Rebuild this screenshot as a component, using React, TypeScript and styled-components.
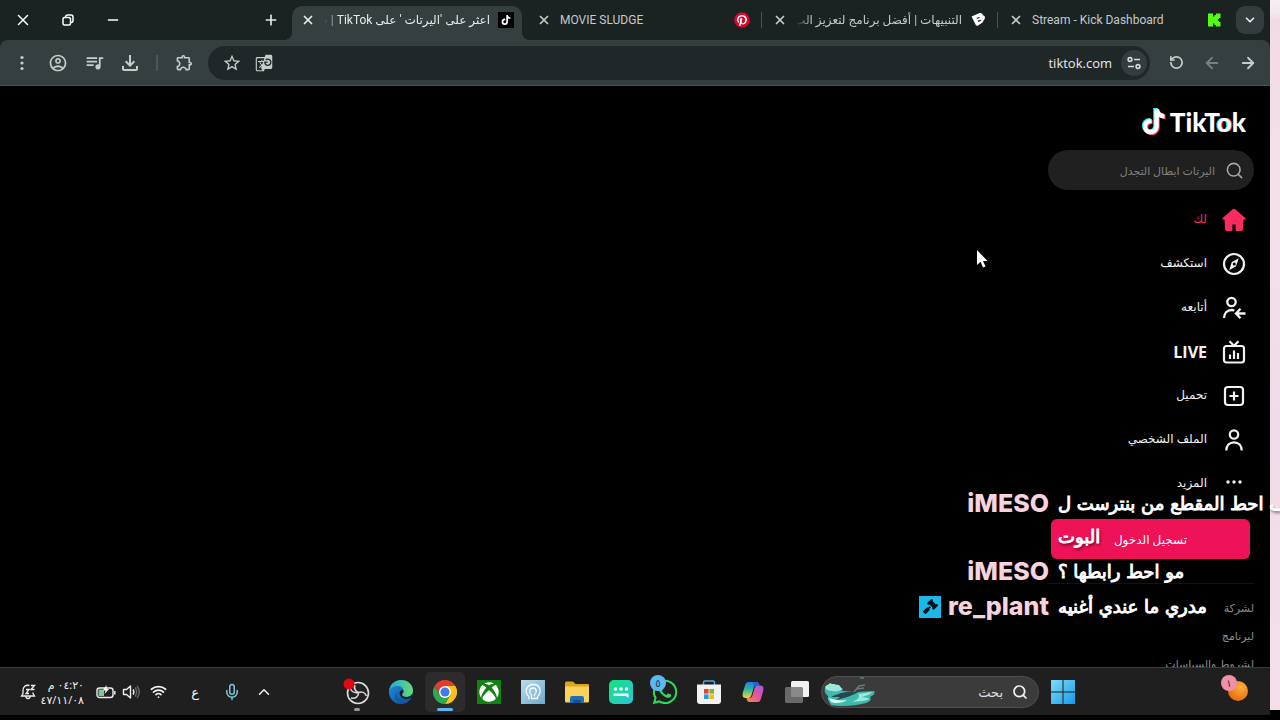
import React from "react";
import styled, { createGlobalStyle, css } from "styled-components";
import {
  ArrowLeft,
  ArrowRight,
  ChevronDown,
  ChevronUp,
  Mic,
  Minus,
  Plus,
  RotateCcw,
  Search,
  Wifi,
  X,
} from "lucide-react";
import {
  MdGTranslate,
  MdOutlineAccountCircle,
  MdOutlineExtension,
  MdOutlineFileDownload,
  MdQueueMusic,
  MdStarBorder,
} from "react-icons/md";
import { FaGavel, FaPinterest, FaTiktok, FaWhatsapp, FaXbox } from "react-icons/fa6";

const uiFont = `"Open Sans", "DejaVu Sans", sans-serif`;
const tabFont = `Roboto, "DejaVu Sans", sans-serif`;

const GlobalStyle = createGlobalStyle`
  * { box-sizing: border-box; }
  body { margin: 0; background: #000; overflow: hidden; font-family: ${uiFont}; }
  button, input { font-family: inherit; }
  button { border: 0; padding: 0; background: none; color: inherit; }
  a { color: inherit; text-decoration: none; }
  svg { display: block; flex: none; }
`;

const Desktop = styled.div`
  position: relative;
  display: grid;
  grid-template-columns: minmax(0, 1fr) 10px;
  height: 100vh;
  padding-bottom: 5px;
  overflow: hidden;
`;

const Screen = styled.div`
  display: flex;
  flex-direction: column;
  min-width: 0;
  min-height: 0;
`;

const Wallpaper = styled.div`
  margin-bottom: 5px;
  background: linear-gradient(#f4eef4, #f3e9f0 12px, #f1dce6 20px, #f5e0ea 180px, #f2dbe8 420px, #f4dfea);
`;

/* Browser chrome */

const TabStrip = styled.div`
  display: flex;
  height: 40px;
  padding-right: 6px;
  background: #1a2222;
  color: #e3e8e8;
`;

const TabSearch = styled.button`
  display: grid;
  place-items: center;
  width: 28px;
  height: 28px;
  margin: 6px 0 0 3px;
  border-radius: 9px;
  background: #353c3d;
`;

const TabBox = styled.div<{ $active?: boolean; $divided?: boolean }>`
  position: relative;
  z-index: 0;
  display: flex;
  align-items: center;
  gap: 8px;
  flex: 0 1 236px;
  min-width: 0;
  margin-top: 6px;
  padding: 0 11px 6px;
  color: ${(p) => (p.$active ? "#e6eaea" : "#c5caca")};
  ${(p) =>
    p.$divided &&
    css`
      &::after {
        content: "";
        position: absolute;
        left: 0;
        top: 6px;
        width: 1px;
        height: 16px;
        background: #4a5253;
      }
    `}
`;

const ActiveShape = styled.span`
  position: absolute;
  z-index: -1;
  inset: 0 3px;
  border-radius: 10px 10px 0 0;
  background: #363f40;
  &::before,
  &::after {
    content: "";
    position: absolute;
    bottom: 0;
    width: 8px;
    height: 8px;
  }
  &::before {
    left: -8px;
    background: radial-gradient(circle at 0 0, transparent 8px, #363f40 8px);
  }
  &::after {
    right: -8px;
    background: radial-gradient(circle at 100% 0, transparent 8px, #363f40 8px);
  }
`;

const TabTitle = styled.span<{ $fade?: boolean }>`
  flex: 1;
  min-width: 0;
  overflow: hidden;
  white-space: nowrap;
  font-family: ${tabFont};
  font-size: 12px;
  line-height: 20px;
  ${(p) => p.$fade && css`mask-image: linear-gradient(to right, transparent, #000 16px);`}
`;

const TabClose = styled.button`
  display: grid;
  place-items: center;
  width: 16px;
  height: 16px;
`;

const PinterestMark = styled(FaPinterest)`
  color: #d9062c;
  background: radial-gradient(circle, #fff 6px, transparent 7px);
`;

const NewTab = styled.button`
  display: grid;
  place-items: center;
  width: 28px;
  height: 28px;
  margin: 6px 4px 0 auto;
`;

const WindowControls = styled.div`
  display: flex;
  margin-right: auto;
`;

const WindowButton = styled.button`
  display: grid;
  place-items: center;
  width: 45px;
  height: 40px;
  color: #fff;
`;

const ToolbarBack = styled.div`
  background: #1a2222;
`;

const Toolbar = styled.div`
  display: flex;
  align-items: center;
  height: 46px;
  padding: 0 4px;
  border-bottom: 1px solid #465051;
  border-radius: 8px 8px 0 0;
  background: #363f40;
  color: #c7cccc;
`;

const ToolButton = styled.button<{ $dim?: boolean }>`
  display: grid;
  place-items: center;
  width: 36px;
  height: 36px;
  opacity: ${(p) => (p.$dim ? 0.45 : 1)};
`;

const ToolDivider = styled.span`
  width: 2px;
  height: 16px;
  margin: 0 8px;
  background: #4d5657;
`;

const AddressBar = styled.div`
  display: flex;
  align-items: center;
  flex: 1;
  min-width: 0;
  height: 34px;
  margin: 0 8px 0 6px;
  padding: 0 3px 0 8px;
  border-radius: 17px;
  background: #1f2728;
`;

const SiteInfo = styled.button`
  display: grid;
  place-items: center;
  width: 26px;
  height: 26px;
  border-radius: 50%;
  background: #353c3d;
`;

const AddressInput = styled.input`
  flex: 1;
  min-width: 0;
  margin: 0 9px;
  padding: 0;
  border: 0;
  outline: 0;
  background: none;
  color: #e8ecec;
  font-size: 13px;
  text-align: right;
`;

const AddressAction = styled.button`
  display: grid;
  place-items: center;
  width: 32px;
  height: 32px;
`;

const MirroredTranslate = styled(MdGTranslate)`
  transform: scaleX(-1);
`;

/* TikTok page */

const Page = styled.main`
  display: flex;
  flex: 1;
  min-height: 0;
  overflow: hidden;
  background: #000;
  color: #f2f2f2;
`;

const Sidebar = styled.aside`
  display: flex;
  flex-direction: column;
  flex: none;
  width: 222px;
  padding: 20px 16px 0 0;
  & > * {
    flex-shrink: 0;
  }
`;

const Logo = styled.a`
  display: flex;
  align-items: center;
  gap: 3px;
  align-self: flex-start;
  height: 32px;
  margin-right: 8px;
  color: #fff;
  font-family: Lato, sans-serif;
  font-size: 26px;
  font-weight: 900;
  line-height: 32px;
`;

const LogoO = styled.span`
  text-shadow: -1px 0 #25f4ee, 1px 0 #fe2c55;
`;

const SearchField = styled.label`
  display: flex;
  align-items: center;
  gap: 10px;
  height: 40px;
  margin-top: 12px;
  padding: 0 10px;
  border-radius: 20px;
  background: #202020;
  color: #a8a8a8;
`;

const SearchInput = styled.input`
  flex: 1;
  min-width: 0;
  padding: 0;
  border: 0;
  outline: 0;
  background: none;
  color: #808080;
  font-size: 11px;
`;

const Nav = styled.nav`
  display: flex;
  flex-direction: column;
  gap: 4px;
  margin-top: 10px;
`;

const NavLink = styled.a<{ $active?: boolean }>`
  display: flex;
  align-items: center;
  gap: 15px;
  height: 40px;
  padding-right: 8px;
  color: ${(p) => (p.$active ? "#fb2b5f" : "#f2f2f2")};
  font-size: 12px;
  line-height: 20px;
`;

const NavText = styled.span<{ $latin?: boolean }>`
  margin-bottom: 2px;
  ${(p) => p.$latin && css`margin-bottom: 0; font-size: 16px; font-weight: 700;`}
`;

const LoginButton = styled.button`
  height: 40px;
  margin: 15px 4px 0 3px;
  border-radius: 6px;
  background: #ee1257;
  color: #fff;
  font-size: 12px;
`;

const FooterLinks = styled.div`
  display: flex;
  flex-direction: column;
  gap: 8px;
  margin-top: 24px;
  padding-top: 14px;
  border-top: 1px solid #141414;
  color: #8c8c8c;
  font-size: 11px;
  line-height: 20px;
`;

/* Taskbar */

const Taskbar = styled.footer`
  display: flex;
  align-items: center;
  height: 48px;
  padding: 0 14px 0 16px;
  border-top: 1px solid #3b3b3b;
  background: #1f1f1f;
  color: #f2f2f2;
`;

const TaskButton = styled.button<{ $active?: boolean }>`
  position: relative;
  display: grid;
  place-items: center;
  width: 40px;
  height: 40px;
  border-radius: 5px;
  background: ${(p) => (p.$active ? "#2c2c2c" : "none")};
`;

const Apps = styled.div`
  display: flex;
  align-items: center;
  gap: 4px;
  margin-right: 133px;
`;

const RunningMark = styled.span<{ $focused?: boolean }>`
  position: absolute;
  bottom: 1px;
  left: 50%;
  width: ${(p) => (p.$focused ? 16 : 6)}px;
  height: 3px;
  border-radius: 2px;
  background: ${(p) => (p.$focused ? "#5cb8f0" : "#9a9a9a")};
  transform: translateX(-50%);
`;

const TaskSearch = styled.label`
  display: flex;
  align-items: center;
  gap: 9px;
  width: 218px;
  height: 32px;
  padding: 0 10px 0 2px;
  border: 1px solid #505050;
  border-radius: 16px;
  background: #3b3b3b;
`;

const TaskSearchInput = styled.input`
  flex: 1;
  min-width: 0;
  padding: 0;
  border: 0;
  outline: 0;
  background: none;
  color: #e0e0e0;
  font-size: 13px;
  &::placeholder {
    color: #e0e0e0;
    opacity: 1;
  }
`;

const Badge = styled.span<{ $tone: string }>`
  position: absolute;
  top: 3px;
  right: 19px;
  width: 16px;
  height: 16px;
  border-radius: 50%;
  background: ${(p) => p.$tone};
  color: #21303c;
  font-size: 10px;
  line-height: 16px;
  text-align: center;
`;

const Tray = styled.div`
  display: flex;
  align-items: center;
  margin-right: auto;
`;

const TrayButton = styled.button<{ $width: number }>`
  display: grid;
  place-items: center;
  width: ${(p) => p.$width}px;
  height: 40px;
  font-size: 13px;
`;

const Clock = styled.time`
  width: 52px;
  padding-right: 8px;
  font-size: 11px;
  line-height: 15px;
  text-align: right;
  white-space: nowrap;
`;

/* Stream chat that floats over the desktop */

const Chat = styled.section`
  position: absolute;
  top: 487px;
  left: calc(100% - 380px);
  display: grid;
  grid-template-columns: 149px max-content;
  column-gap: 9px;
  color: #fff;
  line-height: 33px;
  text-shadow: 1px 2px 3px rgba(0, 0, 0, 0.7);
`;

const ChatName = styled.strong`
  display: flex;
  align-items: center;
  justify-content: flex-end;
  gap: 7px;
  height: 33px;
  color: #f6d3dd;
  font-family: Inter, sans-serif;
  font-size: 25px;
  font-weight: 800;
`;

const ChatText = styled.div`
  display: flex;
  flex-direction: column;
  align-items: flex-start;
  margin-bottom: 2px;
  font-family: "DejaVu Sans", sans-serif;
  font-size: 18px;
  white-space: nowrap;
  -webkit-text-stroke: 1px #fff;
`;

const ModBadge = styled.span`
  display: grid;
  place-items: center;
  width: 22px;
  height: 22px;
  background: #19b9ea;
  color: #06131c;
`;

const Pointer = styled.svg`
  position: absolute;
  top: 249px;
  left: calc(100% - 304px);
`;

const TuneIcon = () => (
  <svg width="16" height="16" viewBox="0 0 16 16" fill="none" stroke="#d5dada" strokeWidth="1.6">
    <circle cx="4" cy="4.5" r="1.9" />
    <path d="M8 4.5h6M2 11.5h6" />
    <circle cx="12" cy="11.5" r="1.9" />
  </svg>
);

const MenuDots = () => (
  <svg width="16" height="16" viewBox="0 0 16 16" fill="currentColor">
    <circle cx="8" cy="2.5" r="1.6" />
    <circle cx="8" cy="8" r="1.6" />
    <circle cx="8" cy="13.5" r="1.6" />
  </svg>
);

const RestoreIcon = () => (
  <svg width="12" height="12" viewBox="0 0 12 12" fill="none" stroke="currentColor" strokeWidth="1.5">
    <rect x="1" y="3.5" width="7.5" height="7.5" rx="1.5" />
    <path d="M3.5 3.2V3a2 2 0 0 1 2-2H9a2 2 0 0 1 2 2v3.500a2 2 0 0 1-2 2h-.3" />
  </svg>
);

const KickIcon = () => (
  <svg width="16" height="16" viewBox="0 0 16 16" fill="#53fc18">
    <path d="M2 1.500h5v3h1.500V3H10V1.500h4.500V6H13v1.200h-1.200v1.600H13V10h1.500v4.500H10V13H8.500v-1.500H7v3H2z" />
  </svg>
);

const BotIcon = () => (
  <svg width="16" height="16" viewBox="0 0 16 16">
    <path
      fill="#fff"
      fillRule="evenodd"
      d="M1.500 4.500 9 1.200c2-.8 3.800.2 3.900 2 1.800.2 2.700 2 1.700 3.700l-2.100 3.600-5.200 3.600-1.500-1.200zM6.500 5.900l.5 1.200 2.200-1c.8-.4.400-1.500-.4-1.200zM7.700 8.800l.6 1.300 2.300-1.100c.8-.5.300-1.600-.6-1.200z"
    />
  </svg>
);

const TikTokTile = () => (
  <svg width="16" height="16" viewBox="0 0 16 16">
    <path fill="#000" d="M0 0h16v16H0z" />
    <FaTiktok x={3} y={3} size={10} color="#fff" />
  </svg>
);

const TikTokNote = () => {
  const note =
    "M12.300 1h4.400c.5 3 2.600 5 5.800 5.300v4.200c-2.100 0-4.100-.6-5.700-1.700v9.400c0 5-3.500 8.300-8 8.300S1 23.200 1 18.800c0-4.700 3.700-8 8.600-7.700v4.200c-2.400-.4-4.300 1.100-4.300 3.400 0 2 1.500 3.500 3.500 3.500 2.100 0 3.500-1.500 3.500-4z";
  return (
    <svg width="26" height="30" viewBox="0 0 26 30">
      <path d={note} fill="#25f4ee" transform="translate(0 0)" />
      <path d={note} fill="#fe2c55" transform="translate(2 1.800)" />
      <path d={note} fill="#fff" transform="translate(1 .9)" />
    </svg>
  );
};

const HomeIcon = () => (
  <svg width="24" height="24" viewBox="0 0 24 24" fill="#fb2b5f">
    <path d="M12 .8c.5 0 .9.2 1.300.5l10 8.600c.7.6.3 1.700-.6 1.700h-1.200l-.6 9.800c-.1.900-.8 1.500-1.700 1.500h-5.600v-6.500h-3.200v6.500H4.800c-.9 0-1.600-.6-1.700-1.500l-.6-9.800H1.300c-.9 0-1.300-1.100-.6-1.700l10-8.600c.4-.3.800-.5 1.300-.5z" />
  </svg>
);

const CompassIcon = () => (
  <svg width="24" height="24" viewBox="0 0 24 24" fill="none" stroke="currentColor" strokeWidth="2.200">
    <circle cx="12" cy="12" r="10" />
    <path fill="currentColor" stroke="none" fillRule="evenodd" d="M16.800 6.200 14 14.300l-6.800 3.900 2.600-8.300zM12.200 10.600a1.500 1.500 0 1 0 .1 3 1.500 1.500 0 0 0-.1-3z" />
  </svg>
);

const FollowingIcon = () => (
  <svg width="24" height="24" viewBox="0 0 24 24" fill="none" stroke="currentColor" strokeWidth="2.300">
    <circle cx="9.500" cy="6" r="4.200" />
    <path d="M2 22c.2-4.800 3-8 7.500-8 1.200 0 2 .2 2.800.5M23.500 17.500h-9M18.500 12.800l-4.500 4.700 4.500 4.700" />
  </svg>
);

const LiveIcon = () => (
  <svg width="24" height="24" viewBox="0 0 24 24" fill="none" stroke="currentColor" strokeWidth="2.200">
    <rect x="2" y="6" width="20" height="16.500" rx="2.500" />
    <path d="m7.500 1.200 4.500 4.600 4.500-4.600M8 14.500v4.500M12 10.500V19M16 13v6" />
  </svg>
);

const UploadIcon = () => (
  <svg width="24" height="24" viewBox="0 0 24 24" fill="none" stroke="currentColor" strokeWidth="2.200">
    <rect x="3" y="3" width="18" height="18" rx="3" />
    <path d="M12 7.500v9M7.500 12h9" />
  </svg>
);

const ProfileIcon = () => (
  <svg width="24" height="24" viewBox="0 0 24 24" fill="none" stroke="currentColor" strokeWidth="2.200">
    <circle cx="12" cy="6.500" r="4.200" />
    <path d="M4.300 22.500c0-5 3-8.200 7.700-8.200s7.700 3.200 7.700 8.200" />
  </svg>
);

const MoreIcon = () => (
  <svg width="24" height="24" viewBox="0 0 24 24" fill="currentColor">
    <circle cx="6" cy="10" r="1.700" />
    <circle cx="12" cy="10" r="1.700" />
    <circle cx="18" cy="10" r="1.700" />
  </svg>
);

const WindowsIcon = () => (
  <svg width="24" height="24" viewBox="0 0 24 24">
    <defs>
      <linearGradient id="win" x1="0" y1="0" x2="1" y2="1">
        <stop offset="0" stopColor="#7fdcfa" />
        <stop offset="1" stopColor="#159be8" />
      </linearGradient>
    </defs>
    <path fill="url(#win)" d="M0 0h11.500v11.500H0zM12.500 0H24v11.500H12.500zM0 12.500h11.500V24H0zM12.500 12.500H24V24H12.500z" />
  </svg>
);

const BoatIcon = () => (
  <svg width="52" height="30" viewBox="0 0 52 30">
    <path fill="#3fb9ad" d="M1 11c4-3 11 1 19 3l12 1 18-1c2 3-2 5-4 6 2 3-1 5-4 6-11 3-25 4-35 2-2-3-4-6-3-9-3-2-4-5-3-8z" />
    <path fill="#9be9dc" d="M1 10c2-3 4-2 5-4 3 2 4 0 7 2 3-1 3 3 6 4-2 2-8 3-11 2-3 0-6-1-7-4zM34 17l14-2c-2 3-7 4-10 5 3 1 6 0 7 2-5 3-12 2-17 3 5-2 9-5 6-8z" />
    <path fill="#d9fff7" d="M5 21c6 2 12 3 18 2-4 3-12 4-16 2z" />
    <path fill="#24484c" d="M7 20c8-4 17-6 29-6-6 4-14 7-24 9l4-3z" />
    <path fill="none" stroke="#64797b" strokeWidth="1.500" d="m30 15 5-6 6-1M33 12l7-1M36 1h4" />
  </svg>
);

const TaskViewIcon = () => (
  <svg width="26" height="24" viewBox="0 0 26 24">
    <rect x="7" y="1" width="18" height="16" rx="1.500" fill="#f1f1f1" />
    <rect x="1" y="7" width="18" height="16" rx="1.500" fill="#777" fillOpacity=".85" />
  </svg>
);

const CopilotIcon = () => (
  <svg width="24" height="24" viewBox="0 0 24 24">
    <defs>
      <linearGradient id="copA" x1="0" y1="0" x2="0" y2="1">
        <stop offset="0" stopColor="#1d7de8" />
        <stop offset=".45" stopColor="#2bb7a3" />
        <stop offset="1" stopColor="#f4d234" />
      </linearGradient>
      <linearGradient id="copB" x1="1" y1="0" x2="0" y2="1">
        <stop offset="0" stopColor="#a259e6" />
        <stop offset=".5" stopColor="#e3569c" />
        <stop offset="1" stopColor="#f78b4b" />
      </linearGradient>
    </defs>
    <path fill="url(#copA)" d="M7.500 2h8c2 0 2.500 1.500 3 3.500h-3c-2 0-2.600 1.500-3.200 3.500l-1.600 5.500c-.6 2-1.500 3.500-3.500 3.500H4.500C1.500 18 1 15 2 12l2-6.500C4.700 3 5.500 2 7.500 2z" />
    <path fill="url(#copB)" d="M16.500 22h-8c-2 0-2.500-1.500-3-4h3c2 0 2.600-1.500 3.200-3.500L13.300 9c.6-2 1.500-3.500 3.500-3.500h2.700c3 0 3.500 3 2.500 6L20 18.500c-.7 2.500-1.500 3.500-3.500 3.500z" />
    <path fill="#2563d9" d="M12 2h3.500c2 0 2.500 1.500 3 3.500h-3c-1.500 0-2.200 1-2.700 2.200z" />
  </svg>
);

const StoreIcon = () => (
  <svg width="24" height="24" viewBox="0 0 24 24">
    <path fill="none" stroke="#4aa9e8" strokeWidth="1.500" d="M6.500 5V2.500Q6.500 1 8 1h8q1.500 0 1.500 1.500V5" />
    <path fill="#f2f2f2" d="M0 4.500h24V21a3 3 0 0 1-3 3H3a3 3 0 0 1-3-3z" />
    <path fill="#e8452c" d="M7 9h4.600v4.600H7z" />
    <path fill="#7cb928" d="M12.400 9H17v4.600h-4.600z" />
    <path fill="#1d9fe0" d="M7 14.400h4.600V19H7z" />
    <path fill="#f9b90f" d="M12.400 14.400H17V19h-4.600z" />
  </svg>
);

const ChatAppIcon = () => (
  <svg width="24" height="24" viewBox="0 0 24 24">
    <defs>
      <linearGradient id="mint" x1="0" y1="0" x2="1" y2="1">
        <stop offset="0" stopColor="#12e37f" />
        <stop offset="1" stopColor="#2cc4d4" />
      </linearGradient>
    </defs>
    <rect width="24" height="24" rx="5" fill="url(#mint)" />
    <g fill="#eafff8">
      <circle cx="6.500" cy="9" r="1.800" />
      <circle cx="12" cy="9" r="1.800" />
      <circle cx="17.500" cy="9" r="1.800" />
      <path d="M4.500 13.500h15v4l-3-1.500h-12z" />
    </g>
  </svg>
);

const FolderIcon = () => (
  <svg width="26" height="24" viewBox="0 0 26 24">
    <path fill="#e0a31c" d="M1 3q0-1.500 1.500-1.500H9l2.500 2.500H24q1 0 1 1v5H1z" />
    <path fill="#fbd35c" d="M1 6.500h24V21q0 1.500-1.500 1.500h-21Q1 22.500 1 21z" />
    <path fill="#1f6fb8" d="M6 18q0-2 2-2h10q2 0 2 2v5H6z" />
    <path fill="#154f8c" d="M9.500 20h7v3h-7z" />
  </svg>
);

const HeadIcon = () => (
  <svg width="24" height="24" viewBox="0 0 24 24">
    <defs>
      <linearGradient id="ice" x1="0" y1="0" x2="1" y2="1">
        <stop offset="0" stopColor="#b9dcee" />
        <stop offset="1" stopColor="#6fa9c9" />
      </linearGradient>
    </defs>
    <path fill="url(#ice)" d="M0 0h24v24H0z" />
    <path fill="none" stroke="#f2fbff" strokeWidth="1.300" d="M8 19.500v-3c-5-4-3-12 4.500-12 7 0 8.500 8 4 12v2h-6v-3.500c-3-2.500-2-7 1.500-7 4 0 4 5 1.500 6.500v2" />
  </svg>
);

const XboxTile = () => (
  <svg width="24" height="24" viewBox="0 0 24 24">
    <path fill="#128212" d="M0 0h24v24H0z" />
    <FaXbox x={2} y={2} size={20} color="#fff" />
  </svg>
);

const ChromeIcon = () => (
  <svg width="24" height="24" viewBox="0 0 24 24">
    <path fill="#e33b2e" d="M1.600 6A12 12 0 0 1 22.400 6H12l-5.200 9z" />
    <path fill="#fbc116" d="M22.400 6A12 12 0 0 1 12 24l5.200-9L12 6z" />
    <path fill="#2da94f" d="M12 24A12 12 0 0 1 1.600 6l5.200 9h10.400z" />
    <circle cx="12" cy="12" r="6" fill="#fff" />
    <circle cx="12" cy="12" r="4.600" fill="#3d7de8" />
  </svg>
);

const EdgeIcon = () => (
  <svg width="24" height="24" viewBox="0 0 24 24">
    <defs>
      <linearGradient id="edgeA" x1="0" y1="0" x2="1" y2="0">
        <stop offset="0" stopColor="#2aa6dc" />
        <stop offset="1" stopColor="#64dc74" />
      </linearGradient>
      <linearGradient id="edgeB" x1="0" y1="0" x2="1" y2="1">
        <stop offset="0" stopColor="#1c93dc" />
        <stop offset="1" stopColor="#0d4a93" />
      </linearGradient>
    </defs>
    <circle cx="12" cy="12" r="12" fill="url(#edgeB)" />
    <path fill="url(#edgeA)" d="M0 11.500C.5 5 5.500 0 12 0c7 0 12 5 12 10.500 0 4-3 6.500-6.500 6.500-3 0-4.500-1.300-4.500-2.300 0-.8 1.500-1.500 1.500-3.700C14.500 8 12 6 8.500 6 4 6 1 8.500 0 11.500z" />
    <path fill="#1f1f1f" d="M14.500 11c0 2.200-1.500 2.900-1.500 3.700 0 1 1.500 2.300 4.500 2.300 2.600 0 4.600-1.200 5.700-3 .3.500.6 1.700.8 2.700l-3.600 1.800c-4 1.400-9-.7-9.800-4.600-.4-2 .8-3.700 3.400-4 .3.300.5.600.5 1.100z" />
    <path fill="#125aa6" d="M8 12c-1 6 3 10 12.400 6.600A12 12 0 0 1 12 24c-5-1-8-8-4-12z" />
  </svg>
);

const ObsIcon = () => (
  <svg width="28" height="28" viewBox="0 0 28 28" fill="none">
    <circle cx="15" cy="15" r="10.500" stroke="#dedede" strokeWidth="1.600" fill="#222" />
    <path stroke="#d8d8d8" strokeWidth="1.600" d="M12 7c-1.500 3.500.5 6.500 3.500 7.500 3-1 6.500 0 8 3.500M15.500 14.500c.2 3.800-3 6.500-7.500 5.500M15.500 14.500c-3 .5-6.500-.5-8-3.500" />
    <circle cx="6" cy="6" r="5.500" fill="#e30613" />
  </svg>
);

const OrangeIcon = () => (
  <svg width="24" height="22" viewBox="0 0 24 22">
    <defs>
      <radialGradient id="orange" cx=".65" cy=".3" r=".8">
        <stop offset="0" stopColor="#fbb13c" />
        <stop offset="1" stopColor="#e76208" />
      </radialGradient>
    </defs>
    <circle cx="14" cy="10" r="10" fill="url(#orange)" />
  </svg>
);

const BatteryIcon = () => (
  <svg width="20" height="14" viewBox="0 0 20 14" fill="none">
    <rect x="1" y="3" width="16" height="9.500" rx="2.500" stroke="#eee" strokeWidth="1.400" />
    <path stroke="#eee" strokeWidth="1.500" d="M18.800 6v3.500" />
    <path fill="#7fc792" d="M2.500 4.500H8v6.500H2.500z" />
    <path fill="#fff" d="M10.500 0 7 5.500h2.500L8.500 9l4.500-5h-2.500z" />
  </svg>
);

const SpeakerIcon = () => (
  <svg width="18" height="16" viewBox="0 0 18 16" fill="none" stroke="#eee" strokeWidth="1.400">
    <path strokeLinejoin="round" d="M1.500 5.500h3L8.500 2v12l-4-3.500h-3z" />
    <path d="M11 5.500q1.800 2.500 0 5" />
    <path stroke="#666" d="M13 3.500q3.400 4.500 0 9M15 2q4.500 6 0 12" />
  </svg>
);

const BellIcon = () => (
  <svg width="16" height="16" viewBox="0 0 16 16" fill="none" stroke="#eee" strokeWidth="1.300">
    <path d="M9.500 1.500C5.500.5 3 3 3 6.500v3L1.500 12h13L13 9.500V8.500M6 12.500a2 2 0 0 0 4 0M6 5.500h3l-3 4h3M11 1.500h3.500l-3.500 4h3.500" />
  </svg>
);

const navItems = [
  { label: "لك", icon: <HomeIcon />, active: true },
  { label: "استكشف", icon: <CompassIcon /> },
  { label: "أتابعه", icon: <FollowingIcon /> },
  { label: "LIVE", icon: <LiveIcon />, latin: true },
  { label: "تحميل", icon: <UploadIcon /> },
  { label: "الملف الشخصي", icon: <ProfileIcon /> },
  { label: "المزيد", icon: <MoreIcon /> },
];

const apps = [
  { name: "Task view", icon: <TaskViewIcon /> },
  { name: "Copilot", icon: <CopilotIcon /> },
  { name: "Store", icon: <StoreIcon /> },
  { name: "WhatsApp", icon: <FaWhatsapp size={28} color="#2fd85f" />, badge: "٥" },
  { name: "Messages", icon: <ChatAppIcon /> },
  { name: "Files", icon: <FolderIcon /> },
  { name: "Assistant", icon: <HeadIcon /> },
  { name: "Xbox", icon: <XboxTile /> },
  { name: "Chrome", icon: <ChromeIcon />, focused: true },
  { name: "Edge", icon: <EdgeIcon /> },
  { name: "OBS Studio", icon: <ObsIcon />, running: true },
];

type TabProps = {
  icon: React.ReactNode;
  title: string;
  rtl?: boolean;
  active?: boolean;
  divided?: boolean;
};

const Tab = ({ icon, title, rtl, active, divided }: TabProps) => (
  <TabBox $active={active} $divided={divided}>
    {active && <ActiveShape />}
    {icon}
    <TabTitle dir={rtl ? "rtl" : "ltr"} $fade={rtl}>
      {title}
    </TabTitle>
    <TabClose aria-label="Close tab">
      <X size={14} strokeWidth={3} />
    </TabClose>
  </TabBox>
);

export default function App() {
  return (
    <>
      <GlobalStyle />
      <Desktop>
        <Screen>
          <TabStrip dir="rtl">
            <TabSearch aria-label="Search tabs">
              <ChevronDown size={14} strokeWidth={3} />
            </TabSearch>
            <Tab icon={<KickIcon />} title="Stream - Kick Dashboard" divided />
            <Tab icon={<BotIcon />} title="التنبيهات | أفضل برنامج لتعزيز الب" rtl divided />
            <Tab icon={<PinterestMark size={16} />} title="MOVIE SLUDGE" />
            <Tab icon={<TikTokTile />} title="اعثر على 'اليرتات ' على TikTok | ب" rtl active />
            <NewTab aria-label="New tab">
              <Plus size={16} strokeWidth={2.5} />
            </NewTab>
            <WindowControls>
              <WindowButton aria-label="Minimize">
                <Minus size={16} />
              </WindowButton>
              <WindowButton aria-label="Restore">
                <RestoreIcon />
              </WindowButton>
              <WindowButton aria-label="Close">
                <X size={18} strokeWidth={2} />
              </WindowButton>
            </WindowControls>
          </TabStrip>
          <ToolbarBack>
            <Toolbar dir="rtl">
              <ToolButton aria-label="Back">
                <ArrowRight size={18} strokeWidth={2.4} />
              </ToolButton>
              <ToolButton aria-label="Forward" $dim>
                <ArrowLeft size={18} strokeWidth={2.4} />
              </ToolButton>
              <ToolButton aria-label="Reload">
                <RotateCcw size={15} strokeWidth={2.7} />
              </ToolButton>
              <AddressBar>
                <SiteInfo aria-label="Site information">
                  <TuneIcon />
                </SiteInfo>
                <AddressInput dir="ltr" aria-label="Address" defaultValue="tiktok.com" />
                <AddressAction aria-label="Translate">
                  <MirroredTranslate size={18} />
                </AddressAction>
                <AddressAction aria-label="Bookmark">
                  <MdStarBorder size={20} />
                </AddressAction>
              </AddressBar>
              <ToolButton aria-label="Extensions">
                <MdOutlineExtension size={19} />
              </ToolButton>
              <ToolDivider />
              <ToolButton aria-label="Downloads">
                <MdOutlineFileDownload size={24} />
              </ToolButton>
              <ToolButton aria-label="Media">
                <MdQueueMusic size={21} />
              </ToolButton>
              <ToolButton aria-label="Profile">
                <MdOutlineAccountCircle size={20} />
              </ToolButton>
              <ToolButton aria-label="Menu">
                <MenuDots />
              </ToolButton>
            </Toolbar>
          </ToolbarBack>
          <Page dir="rtl">
            <Sidebar>
              <Logo href="#" dir="ltr">
                <TikTokNote />
                <span>
                  TikT<LogoO>o</LogoO>k
                </span>
              </Logo>
              <SearchField>
                <Search size={19} strokeWidth={2} />
                <SearchInput aria-label="بحث" defaultValue="اليرتات ابطال التجدل" />
              </SearchField>
              <Nav>
                {navItems.map((item) => (
                  <NavLink key={item.label} href="#" $active={item.active}>
                    {item.icon}
                    <NavText $latin={item.latin}>{item.label}</NavText>
                  </NavLink>
                ))}
              </Nav>
              <LoginButton>تسجيل الدخول</LoginButton>
              <FooterLinks>
                <a href="#">لشركة</a>
                <a href="#">لبرنامج</a>
                <a href="#">لشروط والسياسات</a>
              </FooterLinks>
            </Sidebar>
          </Page>
          <Taskbar dir="rtl">
            <TaskButton aria-label="Widgets">
              <OrangeIcon />
              <Badge $tone="#ef8fa8">١</Badge>
            </TaskButton>
            <Apps>
              <TaskButton aria-label="Start">
                <WindowsIcon />
              </TaskButton>
              <TaskSearch>
                <Search size={16} strokeWidth={2.6} />
                <TaskSearchInput aria-label="بحث" placeholder="بحث" />
                <BoatIcon />
              </TaskSearch>
              {apps.map((app) => (
                <TaskButton key={app.name} aria-label={app.name} $active={app.focused}>
                  {app.icon}
                  {app.badge && <Badge $tone="#5cb8f0">{app.badge}</Badge>}
                  {(app.focused || app.running) && <RunningMark $focused={app.focused} />}
                </TaskButton>
              ))}
            </Apps>
            <Tray>
              <TrayButton $width={32} aria-label="Hidden icons">
                <ChevronUp size={18} />
              </TrayButton>
              <TrayButton $width={32} aria-label="Microphone">
                <Mic size={18} color="#7cc6dc" />
              </TrayButton>
              <TrayButton $width={42}>ع</TrayButton>
              <TrayButton $width={32} aria-label="Network">
                <Wifi size={17} strokeWidth={2.4} />
              </TrayButton>
              <TrayButton $width={22} aria-label="Volume">
                <SpeakerIcon />
              </TrayButton>
              <TrayButton $width={28} aria-label="Battery">
                <BatteryIcon />
              </TrayButton>
              <Clock>
                ٠٤:٢٠ م
                <br />
                ٤٧/١١/٠٨
              </Clock>
              <TrayButton $width={24} aria-label="Notifications">
                <BellIcon />
              </TrayButton>
            </Tray>
          </Taskbar>
        </Screen>
        <Wallpaper />
        <Chat aria-label="Chat">
          <ChatName>iMESO</ChatName>
          <ChatText>
            <span dir="rtl">كيف احط المقطع من بنترست ل</span>
            <span dir="rtl">البوت</span>
          </ChatText>
          <ChatName>iMESO</ChatName>
          <ChatText>
            <span dir="rtl">مو احط رابطها ؟</span>
          </ChatText>
          <ChatName>
            <ModBadge>
              <FaGavel size={15} />
            </ModBadge>
            re_plant
          </ChatName>
          <ChatText>
            <span dir="rtl">مدري ما عندي أغنيه</span>
          </ChatText>
        </Chat>
        <Pointer width="14" height="20" viewBox="0 0 14 20">
          <path fill="#fff" d="M1 1v15l3.500-3.200 2.500 5.700 2.500-1-2.500-5.500h4.500z" />
        </Pointer>
      </Desktop>
    </>
  );
}
